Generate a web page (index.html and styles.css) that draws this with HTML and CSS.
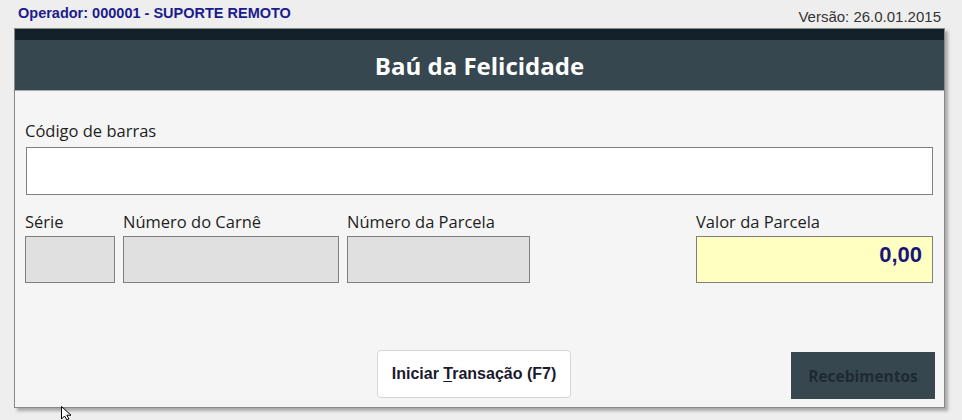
FILE: index.html
```html
<!DOCTYPE html>
<html lang="pt-BR">
<head>
<meta charset="utf-8">
<title>Baú da Felicidade</title>
<link rel="stylesheet" href="styles.css">
</head>
<body>
<div class="topbar">
  <span class="operator">Operador: 000001 - SUPORTE REMOTO</span>
  <span class="version">Versão: 26.0.01.2015</span>
</div>
<div class="panel">
  <div class="strip"></div>
  <div class="header">Baú da Felicidade</div>
  <div class="content">
    <div class="field">
      <label class="lbl">Código de barras</label>
      <div class="input barcode"></div>
    </div>
    <div class="row">
      <div class="field w-serie">
        <label class="lbl">Série</label>
        <div class="input ro"></div>
      </div>
      <div class="field w-carne">
        <label class="lbl">Número do Carnê</label>
        <div class="input ro"></div>
      </div>
      <div class="field w-parcela">
        <label class="lbl">Número da Parcela</label>
        <div class="input ro"></div>
      </div>
      <div class="spacer"></div>
      <div class="field w-valor">
        <label class="lbl">Valor da Parcela</label>
        <div class="input valor">0,00</div>
      </div>
    </div>
    <div class="actions">
      <div></div>
      <button class="btn-primary">Iniciar <u>T</u>ransação (F7)</button>
      <div class="right"><button class="btn-dark">Recebimentos</button></div>
    </div>
  </div>
</div>
<svg class="cursor" width="14" height="14" viewBox="0 0 14 14"><path d="M0.5 0.5 L0.5 13 L3.5 10 L6 14 L8 13 L5.8 9.2 L10 9.2 Z" fill="#fff" stroke="#000" stroke-width="1"/></svg>
</body>
</html>
```
FILE: styles.css
```css
html, body { margin: 0; padding: 0; }
body {
  width: 962px;
  height: 420px;
  background: #eeeeee;
  font-family: "Liberation Sans", Arial, sans-serif;
  overflow: hidden;
  position: relative;
}
.topbar {
  height: 28px;
  display: flex;
  justify-content: space-between;
  align-items: center;
  padding: 0 21px 0 18px;
  box-sizing: border-box;
}
.operator {
  font-weight: bold;
  font-size: 14.5px;
  color: #1b1b8c;
  margin-top: -2px;
}
.version {
  font-size: 15px;
  color: #333;
  margin-top: 5px;
}
.panel {
  margin-left: 14px;
  width: 931px;
  height: 380px;
  background: #f5f5f5;
  border: 1px solid #888;
  box-sizing: border-box;
  box-shadow: 3px 3px 3px #a8a8a8;
  display: flex;
  flex-direction: column;
}
.strip { height: 11px; background: #13222a; }
.header {
  height: 50px;
  background: #37474f;
  color: #fff;
  font-family: "Open Sans", sans-serif;
  font-weight: bold;
  font-size: 24px;
  display: flex;
  align-items: center;
  justify-content: center;
  border-bottom: 1px solid #aaa;
}
.content {
  flex: 1;
  padding: 30px 11px 0 10px;
  display: flex;
  flex-direction: column;
}
.field { display: flex; flex-direction: column; }
.lbl {
  font-family: "Open Sans", sans-serif;
  font-size: 16.5px;
  color: #1e1e1e;
  line-height: 20px;
  margin-bottom: 6px;
  white-space: nowrap;
}
.input {
  border: 1px solid #7f7f7f;
  box-sizing: border-box;
  height: 47px;
}
.barcode { background: #fff; width: 907px; height: 48px; margin-left: 1px; }
.row {
  display: flex;
  gap: 8px;
  margin-top: 17px;
}
.row .lbl { margin-bottom: 4px; }
.ro { background: #e0e0e0; }
.w-serie { width: 90px; }
.w-carne { width: 216px; }
.w-parcela { width: 183px; }
.spacer { flex: 1; }
.w-valor { width: 237px; }
.valor {
  background: #ffffc2;
  color: #16167a;
  font-weight: bold;
  font-size: 22px;
  text-align: right;
  padding: 5px 10px 0 0;
}
.actions {
  margin-top: 67px;
  display: grid;
  grid-template-columns: 1fr auto 1fr;
  align-items: start;
}
.btn-primary {
  width: 194px;
  height: 48px;
  background: #fff;
  border: 1px solid #d6d6d6;
  border-radius: 4px;
  font-family: "Liberation Sans", Arial, sans-serif;
  font-weight: bold;
  font-size: 16px;
  color: #1a1a2e;
  margin-left: -10px;
  padding: 0;
}
.btn-primary u { text-decoration-thickness: 1px; text-underline-offset: 2px; }
.right { display: flex; justify-content: flex-end; }
.btn-dark {
  width: 144px;
  height: 47px;
  margin-top: 2px;
  background: #37474f;
  border: none;
  font-family: "Open Sans", sans-serif;
  font-weight: bold;
  font-size: 15.5px;
  color: #1d2a31;
  margin-right: -2px;
  padding: 0;
}
.cursor { position: absolute; left: 61px; top: 406px; }
```
